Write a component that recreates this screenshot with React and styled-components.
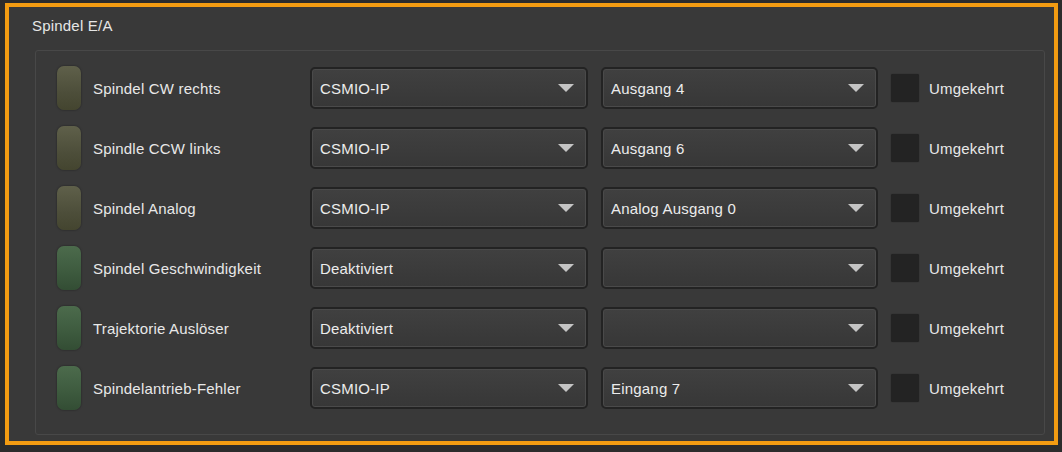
import React from "react";
import styled, { createGlobalStyle } from "styled-components";

const GlobalStyle = createGlobalStyle`
  html, body {
    margin: 0;
    padding: 0;
    background: #2c2c2c;
    font-family: "Liberation Sans", Arial, sans-serif;
  }
`;

const rows = [
  { label: "Spindel CW rechts", device: "CSMIO-IP", port: "Ausgang 4", led: "olive" },
  { label: "Spindle CCW links", device: "CSMIO-IP", port: "Ausgang 6", led: "olive" },
  { label: "Spindel Analog", device: "CSMIO-IP", port: "Analog Ausgang 0", led: "olive" },
  { label: "Spindel Geschwindigkeit", device: "Deaktiviert", port: "", led: "green" },
  { label: "Trajektorie Auslöser", device: "Deaktiviert", port: "", led: "green" },
  { label: "Spindelantrieb-Fehler", device: "CSMIO-IP", port: "Eingang 7", led: "green" },
];

function Dropdown({ value, width }) {
  return (
    <Select $width={width}>
      <SelectText>{value}</SelectText>
      <svg width="16" height="8" viewBox="0 0 16 8">
        <path d="M0 0 H16 L8 8 Z" fill="#c4c4c4" />
      </svg>
    </Select>
  );
}

export default function App() {
  return (
    <>
      <GlobalStyle />
      <Frame>
        <Title>Spindel E/A</Title>
        <Group>
          {rows.map((row, idx) => (
            <Row key={idx}>
              <Led $color={row.led} />
              <Label>{row.label}</Label>
              <Dropdown value={row.device} width={278} />
              <Dropdown value={row.port} width={277} />
              <Check />
              <CheckLabel>Umgekehrt</CheckLabel>
            </Row>
          ))}
        </Group>
      </Frame>
    </>
  );
}

const Frame = styled.div`
  box-sizing: border-box;
  width: 1053px;
  height: 442px;
  margin: 3px 0 0 5px;
  border: 4px solid #f39c12;
  background: #393939;
  display: flex;
  flex-direction: column;
`;

const Title = styled.div`
  color: #e6e6e6;
  font-size: 15px;
  letter-spacing: 0.2px;
  padding: 10px 0 0 23px;
  height: 28px;
`;

const Group = styled.div`
  margin: 5px 9px 6px 26px;
  flex: 1;
  border: 1px solid #484848;
  border-radius: 3px;
  padding: 7px 0 0 21px;
  box-sizing: border-box;
`;

const Row = styled.div`
  display: flex;
  align-items: center;
  height: 60px;
  gap: 13px;
`;

const ledColors = {
  olive: ["#5f604a", "#4d4e3a", "#44452f"],
  green: ["#4c6b4c", "#3d5a3e", "#334d34"],
};

const Led = styled.div`
  width: 24px;
  height: 44px;
  border-radius: 7px;
  margin-right: -1px;
  background: linear-gradient(
    to bottom,
    ${(p) => ledColors[p.$color][0]},
    ${(p) => ledColors[p.$color][1]} 60%,
    ${(p) => ledColors[p.$color][2]}
  );
  box-shadow: 0 0 2px rgba(0, 0, 0, 0.5);
`;

const Label = styled.div`
  width: 204px;
  color: #e8e8e8;
  font-size: 15px;
  letter-spacing: 0.2px;
`;

const Select = styled.div`
  box-sizing: border-box;
  width: ${(p) => p.$width}px;
  height: 42px;
  border: 2px solid #232323;
  border-radius: 5px;
  box-shadow: inset 0 0 0 1px #4a4a4a;
  background: linear-gradient(to bottom, #404040, #373737);
  display: flex;
  align-items: center;
  justify-content: space-between;
  padding: 0 12px 0 8px;
`;

const SelectText = styled.span`
  color: #ececec;
  font-size: 15px;
  letter-spacing: 0.2px;
`;

const Check = styled.div`
  width: 28px;
  height: 28px;
  background: #232323;
  border-radius: 2px;
  box-shadow: 0 0 1px #1a1a1a;
`;

const CheckLabel = styled.div`
  margin-left: -3px;
  color: #e8e8e8;
  font-size: 15px;
  letter-spacing: 0.2px;
`;
